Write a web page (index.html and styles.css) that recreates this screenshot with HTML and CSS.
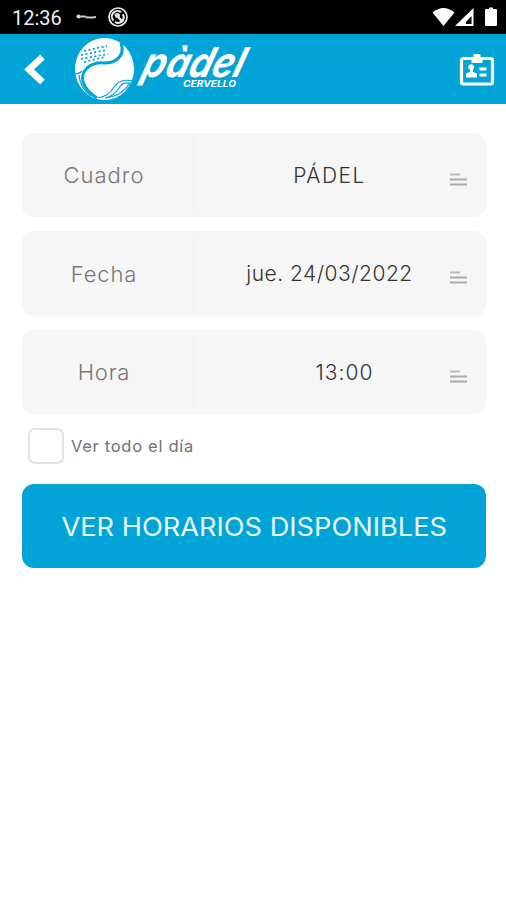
FILE: index.html
```html
<!DOCTYPE html>
<html lang="es">
<head>
<meta charset="utf-8">
<title>Pàdel Cervello</title>
<link rel="stylesheet" href="styles.css">
</head>
<body>
<div class="status">
  <span class="clock">12:36</span>
  <svg class="key" width="22" height="8" viewBox="0 0 22 8"><circle cx="2.5" cy="3.5" r="2" fill="#ddd"/><path d="M4 3.5h5l2 1h5l4-.5" fill="none" stroke="#ccc" stroke-width="1.8"/></svg>
  <svg class="sync" width="20" height="20" viewBox="0 0 20 20" fill="none" stroke="#eee"><circle cx="10" cy="10" r="9" stroke-width="1.7"/><path d="M5.500 13.500A5.600 5.600 0 0 1 13 5.200M14.800 7.300A5.600 5.600 0 0 1 7 14.900" stroke-width="2"/><path d="M7 7l8 8" stroke-width="2.400"/><circle cx="9.500" cy="8.500" r="2.500" fill="#ddd" stroke="none"/></svg>
  <svg class="signals" width="66" height="22" viewBox="0 0 66 22" fill="#fff"><path d="M.5 5.500Q11.500-3.500 22.500 5.500L11.500 19z"/><path fill-rule="evenodd" d="M41.500 1v18H23zM39.500 9l-5.500 6v2h5.500z"/><path d="M54 2h3V.5h4V2h3q1 0 1 1v15q0 1-1 1H54q-1 0-1-1V3q0-1 1-1z"/></svg>
</div>
<header class="bar">
  <svg class="back" width="22" height="30" viewBox="0 0 22 30"><path d="M19.500 3L6 15.500 19.500 28" fill="none" stroke="#fff" stroke-width="6.500"/></svg>
  <svg class="logo" width="190" height="70" viewBox="0 0 190 70">
    <ellipse cx="34.500" cy="35" rx="29.500" ry="31" fill="#fff"/>
    <g fill="none" stroke="#02a4d7">
      <path d="M51 9q4 11-5 17-4 3-12 3-10-1-17 5-6 6-4 14 3 9 14 16" stroke-width="3"/>
      <path d="M4 40q5 0 8-3M9 41q1 13 12 21" stroke-width="1.300"/>
      <path d="M28 64q11-2 16-11 6-9 19-6M60 49q-8-1-11 5-5 8-14 10 17-2 25-15z" stroke-width="1.200"/>
      <path d="M14 17l23-5M11 21l26-5M11 25l27-5M14 28l21-5" stroke-width="1.800" stroke-dasharray="2 2.500"/>
    </g>
    <text class="word" transform="translate(70 42.500) skewX(-17) scale(1 1.060)" textLength="101" lengthAdjust="spacingAndGlyphs">pàdel</text>
    <text class="subword" x="113" y="53" textLength="53" lengthAdjust="spacingAndGlyphs">CERVELLO</text>
  </svg>
  <svg class="card" width="36" height="34" viewBox="0 0 36 34"><rect x="2.500" y="5.500" width="31" height="25.500" rx="2" fill="none" stroke="#fff" stroke-width="3.200"/><path d="M12.500 5h2V2q0-1 1-1h5q1 0 1 1v3h2v5h-11zM9 14a3 3 0 1 1 5 2.500v2.500l4 1.500v4H7v-4l4-1.500v-2.500q-2-1-2-2.500zM20.500 14.500h7v3h-7zM20.500 20.500h7v3h-7z" fill="#fff"/></svg>
</header>
<main>
  <div class="field"><span class="label"><span class="t-cuadro">Cuadro</span></span><span class="value"><span class="t-padel">PÁDEL</span></span><svg class="lines" width="17" height="14"><path d="M0 1.500h10" stroke="#bbb" stroke-width="2"/><path d="M0 6.500h17M0 11.500h17" stroke="#aaa" stroke-width="2"/></svg></div>
  <div class="field tall"><span class="label"><span class="t-fecha">Fecha</span></span><span class="value"><span class="t-date">jue. 24/03/2022</span></span><svg class="lines" width="17" height="14"><path d="M0 1.500h10" stroke="#bbb" stroke-width="2"/><path d="M0 6.500h17M0 11.500h17" stroke="#aaa" stroke-width="2"/></svg></div>
  <div class="field"><span class="label"><span class="t-hora">Hora</span></span><span class="value hour"><span class="t-time">13:00</span></span><svg class="lines" width="17" height="14"><path d="M0 1.500h10" stroke="#bbb" stroke-width="2"/><path d="M0 6.500h17M0 11.500h17" stroke="#aaa" stroke-width="2"/></svg></div>
  <label class="check"><span class="box"></span><span class="t-check">Ver todo el día</span></label>
  <button class="submit"><span class="t-submit">VER HORARIOS DISPONIBLES</span></button>
</main>
</body>
</html>
```
FILE: styles.css
```css
* { box-sizing: border-box; }
body { margin: 0; width: 506px; height: 900px; background: #fff; font-family: Inter, sans-serif; overflow: hidden; }
svg { display: block; flex: none; overflow: visible; }
.status { height: 34px; background: #000; display: flex; align-items: center; padding: 0 8px 0 12px; }
.clock { font: 400 20px/24px Roboto, sans-serif; color: #eee; width: 64px; padding-top: 2px; }
.sync { margin-left: 10px; }
.signals { margin-left: auto; margin-top: 2px; }
.bar { height: 70px; background: #02a4d7; display: flex; align-items: center; padding: 0 11px 0 23px; }
.logo { margin-left: 25px; }
.card { margin-left: auto; margin-top: 2px; }
.word { font: italic 700 39px Inter, sans-serif; fill: #fff; }
.subword { font: italic 700 9px Inter, sans-serif; fill: #fff; }
main { padding: 29px 20px 0 22px; display: flex; flex-direction: column; }
.field { height: 84px; margin-bottom: 14px; border-radius: 12px; background: #f6f6f6; display: flex; align-items: center; }
.tall { height: 85px; }
.label { width: 173px; height: 74px; border-right: 2px solid #f2f2f2; display: flex; align-items: center; justify-content: center; color: #777; font-size: 22px; padding-right: 7px; }
.value { width: 255px; display: flex; justify-content: center; padding-left: 14px; color: #333; font-size: 21px; font-weight: 350; }
.hour { padding-left: 44px; }
.label span { font-weight: 350; }
.t-cuadro { letter-spacing: 1px; }
.t-fecha { letter-spacing: 0.9px; }
.t-hora { letter-spacing: 0.8px; }
.t-padel { letter-spacing: 1.5px; }
.t-date { letter-spacing: 0.5px; }
.t-time { letter-spacing: 1px; }
.lines { margin-top: 9px; }
.check { display: flex; align-items: center; height: 36px; padding-left: 6px; }
.box { width: 36px; height: 36px; border: 2px solid #e2e2e2; border-radius: 7px; margin-right: 7px; }
.t-check { font-size: 16.5px; color: #727272; letter-spacing: 0.7px; }
.submit { margin-top: 20px; height: 84px; border: 0; border-radius: 12px; background: #02a4d7; color: #e8faff; font-family: Inter, sans-serif; font-size: 25px; font-weight: 400; padding: 2px 0 0; }
.t-submit { display: inline-block; transform: scaleX(1.088); }
```
